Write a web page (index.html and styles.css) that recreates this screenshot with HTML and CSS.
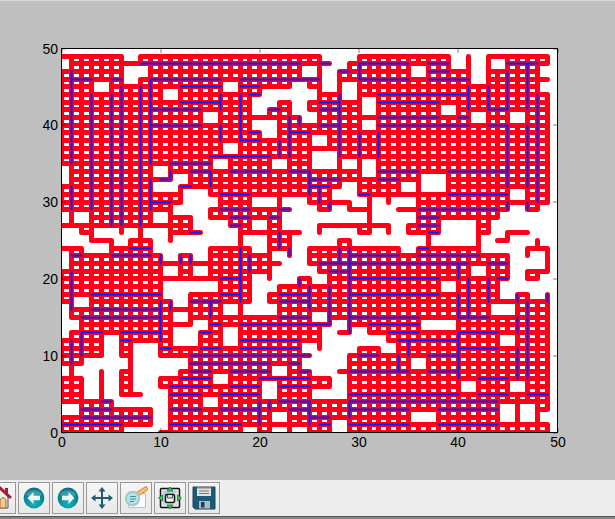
FILE: index.html
```html
<!DOCTYPE html>
<html lang="en">
<head>
<meta charset="utf-8">
<title>Figure 1</title>
<link rel="stylesheet" href="styles.css">
</head>
<body>
<main class="figure">
  <svg class="plot" viewBox="0 0 615 480" role="img" aria-label="Lattice plot">
    <defs><clipPath id="area"><rect x="62" y="49" width="495" height="384"/></clipPath></defs>
    <rect class="plot-area" x="61" y="48" width="497" height="385"/>
    <g clip-path="url(#area)">
      <path class="nodes" id="nodes"/>
      <path class="route" id="route"/>
    </g>
    <path class="ticks" id="ticks"/>
    <rect class="frame" x="61.5" y="48.5" width="496" height="384"/>
    <g class="labels" id="labels"></g>
  </svg>
</main>
<nav class="toolbar" aria-label="Plot tools">
  <button class="tool" type="button" aria-label="Home">
    <svg viewBox="0 0 24 24"><path d="M4 11L12 3l8 8v11H4z" fill="#f3efe8" stroke="#555"/><path d="M12 22v-8q3-5 6 0v8z" fill="#f8c88c" stroke="#9c6a35"/><path d="M1 12L12 2l11 10" fill="none" stroke="#a51d32" stroke-width="3"/><path d="M17 2h3v6l-3-3z" fill="#a51d32"/></svg>
  </button>
  <button class="tool" type="button" aria-label="Back">
    <svg viewBox="0 0 24 24"><defs><radialGradient id="orb" cx=".5" cy=".75" r=".75"><stop offset="0" stop-color="#17b4bd"/><stop offset=".6" stop-color="#078897"/><stop offset="1" stop-color="#0b6d80"/></radialGradient></defs><circle cx="12" cy="12" r="10.4" fill="url(#orb)"/><path d="M3.500 9a9 7 0 0 1 17 0q-8 4-17 0z" fill="#fff" opacity=".2"/><path d="M5.500 12l6-6v3.800h6.500v4.400h-6.500V18z" fill="#e9fafa"/></svg>
  </button>
  <button class="tool" type="button" aria-label="Forward">
    <svg viewBox="0 0 24 24"><circle cx="12" cy="12" r="10.4" fill="url(#orb)"/><path d="M3.500 9a9 7 0 0 1 17 0q-8 4-17 0z" fill="#fff" opacity=".2"/><path d="M18.500 12l-6-6v3.800H6v4.400h6.500V18z" fill="#e9fafa"/></svg>
  </button>
  <button class="tool" type="button" aria-label="Pan">
    <svg viewBox="0 0 24 24"><path d="M12 3v18M3 12h18" stroke="#1c5c75" stroke-width="2"/><path d="M12 1l3.500 4.500h-7zM12 23l3.500-4.500h-7zM1 12l4.500-3.500v7zM23 12l-4.500-3.500v7z" fill="#1c5c75"/></svg>
  </button>
  <button class="tool" type="button" aria-label="Zoom">
    <svg viewBox="0 0 24 24"><path d="M4.500 7.500h17v14h-17z" fill="#fafdfd" stroke="#91d2d9"/><path d="M14.500 7.500l7-4.500" stroke="#d98b3c" stroke-width="5" stroke-linecap="round"/><path d="M14.500 7.500l7-4.500" stroke="#f9bd79" stroke-width="3" stroke-linecap="round"/><circle cx="8.500" cy="12.500" r="6.700" fill="#b5dfe2" fill-opacity=".9" stroke="#a2c9ce" stroke-width="2"/><path d="M6 10.500h6M6 13h6M6 15.500h4" stroke="#3f929e"/></svg>
  </button>
  <button class="tool" type="button" aria-label="Subplots">
    <svg viewBox="0 0 24 24"><rect x="2.500" y="2.500" width="19" height="19" rx="1" fill="#e3e6e8" stroke="#111" stroke-width="1.500"/><path d="M5 5h14v14H5z" fill="#a8cdec"/><path d="M19 5v14H5z" fill="#dcdcdc"/><rect x="7.500" y="8.500" width="9" height="8" rx="1.500" fill="#f4f4f4" stroke="#111" stroke-width="1.500"/><path d="M9.500 9v3h5V9" fill="#ddd" stroke="#555"/><path d="M12 1l3 4H9zM12 23l3-4H9zM.500 12l4-3v6zM23.500 12l-4-3v6z" fill="#37cf4b" stroke="#17772a" stroke-width=".8"/></svg>
  </button>
  <button class="tool" type="button" aria-label="Save">
    <svg viewBox="0 0 24 24"><path d="M1 1h22v22H3l-2-2z" fill="#1d5a78" stroke="#174861"/><path d="M5 1h14v9H5z" fill="#e0e3e4"/><path d="M5 1h14v1.500H5z" fill="#c56a43"/><path d="M7 5h10M7 7.500h10" stroke="#777"/><path d="M7 15h11v7.500H7z" fill="#aeb9c0"/><path d="M9 16h3.500v5.500H9z" fill="#17405a"/></svg>
  </button>
</nav>
<div class="window-edge"></div>
<script src="plot.js"></script>
</body>
</html>
```
FILE: styles.css
```css
html {
  min-height: 100%;
  background: #858585;
}
body {
  margin: 0;
  overflow: hidden;
  font-family: "Liberation Sans", Arial, sans-serif;
}
.figure {
  background: #bfbfbf;
  box-shadow: inset 0 1px #d6d6d6;
}
.plot {
  display: block;
  width: 100%;
  height: auto;
}
.plot-area {
  fill: #fff;
}
.nodes {
  fill: none;
  stroke: #ff0018;
  stroke-width: 5;
  stroke-linecap: round;
}
.route {
  fill: none;
  stroke: #0a1fff;
  stroke-width: 2;
  stroke-linecap: square;
}
.ticks {
  fill: none;
  stroke: #000;
  stroke-opacity: 0.25;
  stroke-width: 2;
}
.frame {
  fill: none;
  stroke: #000;
}
.labels {
  font-size: 14px;
  fill: #000;
}
.x-label {
  text-anchor: middle;
}
.y-label {
  text-anchor: end;
}
.toolbar {
  display: flex;
  gap: 2px;
  margin-left: -16px;
  padding: 2px 0;
  background: #ededed;
}
.tool {
  display: grid;
  place-items: center;
  flex: none;
  width: 32px;
  height: 32px;
  padding: 0;
  border: 1px solid #999;
  background: linear-gradient(#f5f5f5, #e8e8e8);
}
.tool svg {
  width: 24px;
  height: 24px;
}
.window-edge {
  height: 3px;
  background: #858585;
  border-top: 1px solid #555;
  box-sizing: border-box;
}
```
FILE: plot.js
```js
// Empty lattice sites for each row, top row (49) first.
const gaps = [
  "7,27-29,40,42", "0,28,40,42,44", "7-8,25,27,36,42,49", "7,27,42",
  "4,17,24,27,29,49", "11,21-25,29", "20-21,24,31", "20,24,31,39",
  "15,25,42,46", "20-21,31", "21", "26", "17", "26-27",
  "16,22,26-27,29,31", "0,10,31", "0,12,37-38", "10-11,29,35,37-38",
  "13-14,28-29,46", "13-15,20-21,23-24,30,32,34-35",
  "12-14,24-25,28,32-33,46,49", "0,2,10,14,23-30,32-35,45-49",
  "14-16,20,23-25,34,39-41,44-49",
  "0-1,4-5,7,9-10,15-17,25,27-29,32,34,39-41,44,48-49",
  "0-2,6,10,12-17,19-20,24-27,30-36,38-41,43,46-47,49",
  "3-4,10-14,20,24,35,43-46", "0,11,14,22,24,46,48", "0,23-24,46-48",
  "11,14,22-25,42,46", "20,22-23,26,46,49", "11-15,20-21,39,45-49",
  "11-12,20,45,48", "2,12,20", "0,17,19-21,44-45", "0,12,26",
  "0-1,14,28,37-39", "0,12-13,17,27,30", "5,12-13,17,27-32,45",
  "5,8-9,25,27-29,33", "5,8-9,26-28", "3-6,8-12,25-28,36",
  "0,2-3,5,8-11,22,26-27", "3,5,8-9,16,28", "3,5,8-9,21,28,41,46",
  "3,5,9-10,21,26-28", "6-10,15", "0-1,10,45,47", "10,22,36-37,45,47,49",
  "10,28", "7-9,19,22,24,28"
];

// Horizontal runs as row:from-to, vertical runs as column:from-to.
const across = `48:8-24 46:1-3 46:5-6 46:9-16 45:12-16 43:12-16 42:9-14 40:9-14 36:15-21
35:11-15 34:13-15 33:10-11 30:9-11 48:26-27 47:28-29 48:30-35 46:30-35 46:18-26 45:18-20
44:19-20 42:21-22 43:26-28 42:26-28 40:26-28 39:23-25 39:19-20 38:18-20 44:32-41 43:32-38
41:32-38 40:32-41 34:17-21 34:23-25 33:25-28 34:32-36 33:32-34 48:37-39 47:37-39 46:37-41
41:40-41 48:45-48 42:43-45 40:43-45 34:39-45 32:12-13 31:16-19 29:16-19 26:13-14 24:7-9
23:1-2 23:5-9 20:16-18 18:3-10 18:16-18 17:13-16 16:3-10 15:2-10 13:2-4 13:6-10 12:6-7
11:10-11 14:15-16 13:14-15 11:14-16 10:13-25 9:13-21 8:13-15 7:12-15 6:11-15 5:11-14
5:16-20 4:4-5 3:2-5 2:2-9 1:0-6 3:11-14 3:16-20 1:11-18 0:10-11 28:17-19 28:21-22
29:22-23 32:25-27 27:17-18 31:30-31 23:29-34 22:26-41 21:27-29 20:29-38 18:29-38 18:22-25
17:22-25 31:39-45 29:36-44 28:36-38 27:36-38 26:37-38 24:36-37 23:36-42 22:43-45 20:44-45
15:22-25 15:29-36 14:18-27 14:31-36 13:33-36 12:18-24 11:18-24 9:23-24 8:17-21 8:24-25
7:20-25 6:17-20 6:22-25 4:22-25 3:23-25 2:25-27 1:26-27 10:30-32 8:29-35 5:29-40 4:29-44
3:29-35 1:29-35 15:40-43 13:40-44 12:34-40 11:40-44 10:37-40 8:37-40 7:42-45 5:42-45
5:47-49 3:38-44 1:38-44`;
const upward = `1:35-47 3:29-44 5:27-44 6:27-45 8:27-45 9:35-46 16:42-44 16:38-40 11:33-34
15:32-34 1:29-32 9:29-33 18:38-44 24:40-41 23:36-41 22:36-38 28:36-44 30:46-48 30:36-39
32:36-39 25:31-34 41:42-45 43:42-45 45:42-47 47:42-48 48:30-44 45:32-40 47:32-40 10:22-23
12:22-23 13:22-23 1:16-21 10:12-17 11:16-17 15:15-17 1:9-12 2:10-13 26:30-32 27:29-30
22:24-26 23:23-24 18:17-24 19:21-23 28:22-24 29:13-24 24:19-20 25:16-19 27:14-19 45:29-30
47:29-30 40:20-22 41:15-20 43:17-20 40:15-18 46:17-18 49:17-18 47:7-17 20:1-4 21:3-4
25:1-4 29:2-4 34:8-10 35:10-12 40:7-13 46:13-15 46:7-11`;

// Pixel centres keep every line sharp.
const px = i => Math.floor(61.5 + 9.92 * i) + 0.5;
const py = j => Math.floor(432.5 - 7.68 * j) + 0.5;
const line = (a, b, c, d) => `M${px(a)} ${py(b)}L${px(c)} ${py(d)}`;

const empty = new Set();
gaps.forEach((row, k) => row.split(",").forEach(part => {
  const [from, to = from] = part.split("-").map(Number);
  for (let i = from; i <= to; i++) empty.add(`${i},${49 - k}`);
}));
const filled = (i, j) => i < 50 && j < 50 && !empty.has(`${i},${j}`);

let nodes = "";
for (let j = 0; j < 50; j++) {
  for (let i = 0; i < 50; i++) {
    if (!filled(i, j)) continue;
    if (filled(i + 1, j)) nodes += line(i, j, i + 1, j);
    if (filled(i, j + 1)) nodes += line(i, j, i, j + 1);
  }
}
document.getElementById("nodes").setAttribute("d", nodes);

const runs = text => text.split(/\s+/).map(run => run.split(/[:-]/).map(Number));
document.getElementById("route").setAttribute("d",
  runs(across).map(([j, a, b]) => line(a, j, b, j)).join("") +
  runs(upward).map(([i, a, b]) => line(i, a, i, b)).join(""));

let ticks = "";
let labels = "";
for (let v = 0; v <= 50; v += 10) {
  const x = Math.round(61.5 + 9.92 * v);
  const y = Math.round(432.5 - 7.68 * v);
  ticks += `M${x} 49v4M${x} 432v-4M62 ${y}h4M557 ${y}h-4`;
  labels += `<text class="x-label" x="${x}" y="447">${v}</text>`;
  labels += `<text class="y-label" x="58" y="${y + 5}">${v}</text>`;
}
document.getElementById("ticks").setAttribute("d", ticks);
document.getElementById("labels").innerHTML = labels;
```
